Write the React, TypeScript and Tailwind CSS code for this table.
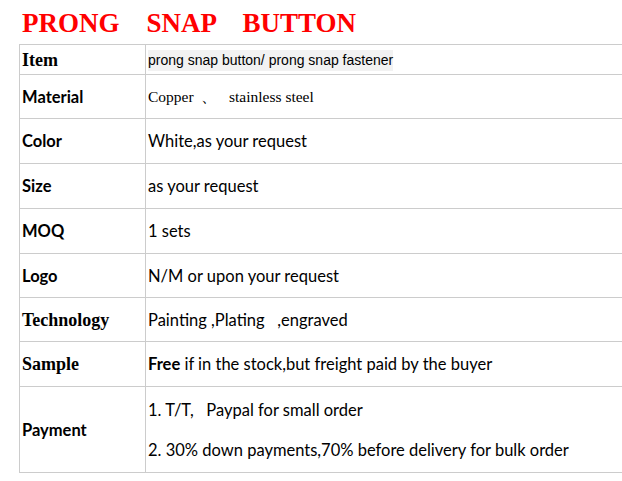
import React from 'react';

// Product spec sheet: prong snap button

const serif = "font-['Liberation_Serif','Times_New_Roman',serif]";
const sans = "font-['Lato','Noto_Sans',sans-serif]";
const arial = "font-['Liberation_Sans',Arial,sans-serif]";

interface RowProps {
  label: React.ReactNode;
  children: React.ReactNode;
  h: string;
}

const Row: React.FC<RowProps> = ({ label, children, h }) => (
  <div className={`flex border-b border-[#cccccc] ${h}`}>
    <div className="w-[126px] shrink-0 border-r border-[#cccccc] pl-[2px] pt-[1px] flex items-center text-black">
      {label}
    </div>
    <div className="flex-1 pl-[2px] pt-[1px] flex items-center text-black">{children}</div>
  </div>
);

const SansLabel: React.FC<{ text: string }> = ({ text }) => (
  <span className={`${sans} text-[16.5px] font-bold`}>{text}</span>
);

const SerifLabel: React.FC<{ text: string }> = ({ text }) => (
  <span className={`${serif} text-[18px] font-bold`}>{text}</span>
);

export default function App() {
  return (
    <div className="w-[622px] h-[481px] bg-white overflow-hidden">
      <div className="h-[44px] pt-[10px] pl-[22px]">
        <h1 className={`${serif} text-[27px] leading-none font-bold text-[#ff0000] whitespace-pre`}>
          {'PRONG    SNAP    BUTTON'}
        </h1>
      </div>
      <div className="ml-[19px] border-l border-t border-[#cccccc]">
        <Row h="h-[30px]" label={<SerifLabel text="Item" />}>
          <span className={`${arial} text-[14px] bg-[#f2f2f2]`}>
            prong snap button/ prong snap fastener
          </span>
        </Row>
        <Row h="h-[44px]" label={<SansLabel text="Material" />}>
          <span className={`${serif} text-[15.5px] whitespace-pre`}>
            {'Copper  、   stainless steel'}
          </span>
        </Row>
        <Row h="h-[45px]" label={<SansLabel text="Color" />}>
          <span className={`${sans} text-[16.5px]`}>White,as your request</span>
        </Row>
        <Row h="h-[45px]" label={<SansLabel text="Size" />}>
          <span className={`${sans} text-[16.5px]`}>as your request</span>
        </Row>
        <Row h="h-[45px]" label={<SansLabel text="MOQ" />}>
          <span className={`${sans} text-[16.5px]`}>1 sets</span>
        </Row>
        <Row h="h-[44px]" label={<SansLabel text="Logo" />}>
          <span className={`${sans} text-[16.5px]`}>N/M or upon your request</span>
        </Row>
        <Row h="h-[44px]" label={<SerifLabel text="Technology" />}>
          <span className={`${sans} text-[16.5px] whitespace-pre`}>{'Painting ,Plating   ,engraved'}</span>
        </Row>
        <Row h="h-[45px]" label={<SerifLabel text="Sample" />}>
          <span className={`${sans} text-[16.5px]`}>
            <b>Free</b> if in the stock,but freight paid by the buyer
          </span>
        </Row>
        <Row h="h-[86px]" label={<SansLabel text="Payment" />}>
          <div className={`${sans} text-[16.5px] leading-[20px] flex flex-col gap-[20px] whitespace-pre`}>
            <span>{'1. T/T,   Paypal for small order'}</span>
            <span>2. 30% down payments,70% before delivery for bulk order</span>
          </div>
        </Row>
      </div>
    </div>
  );
}
